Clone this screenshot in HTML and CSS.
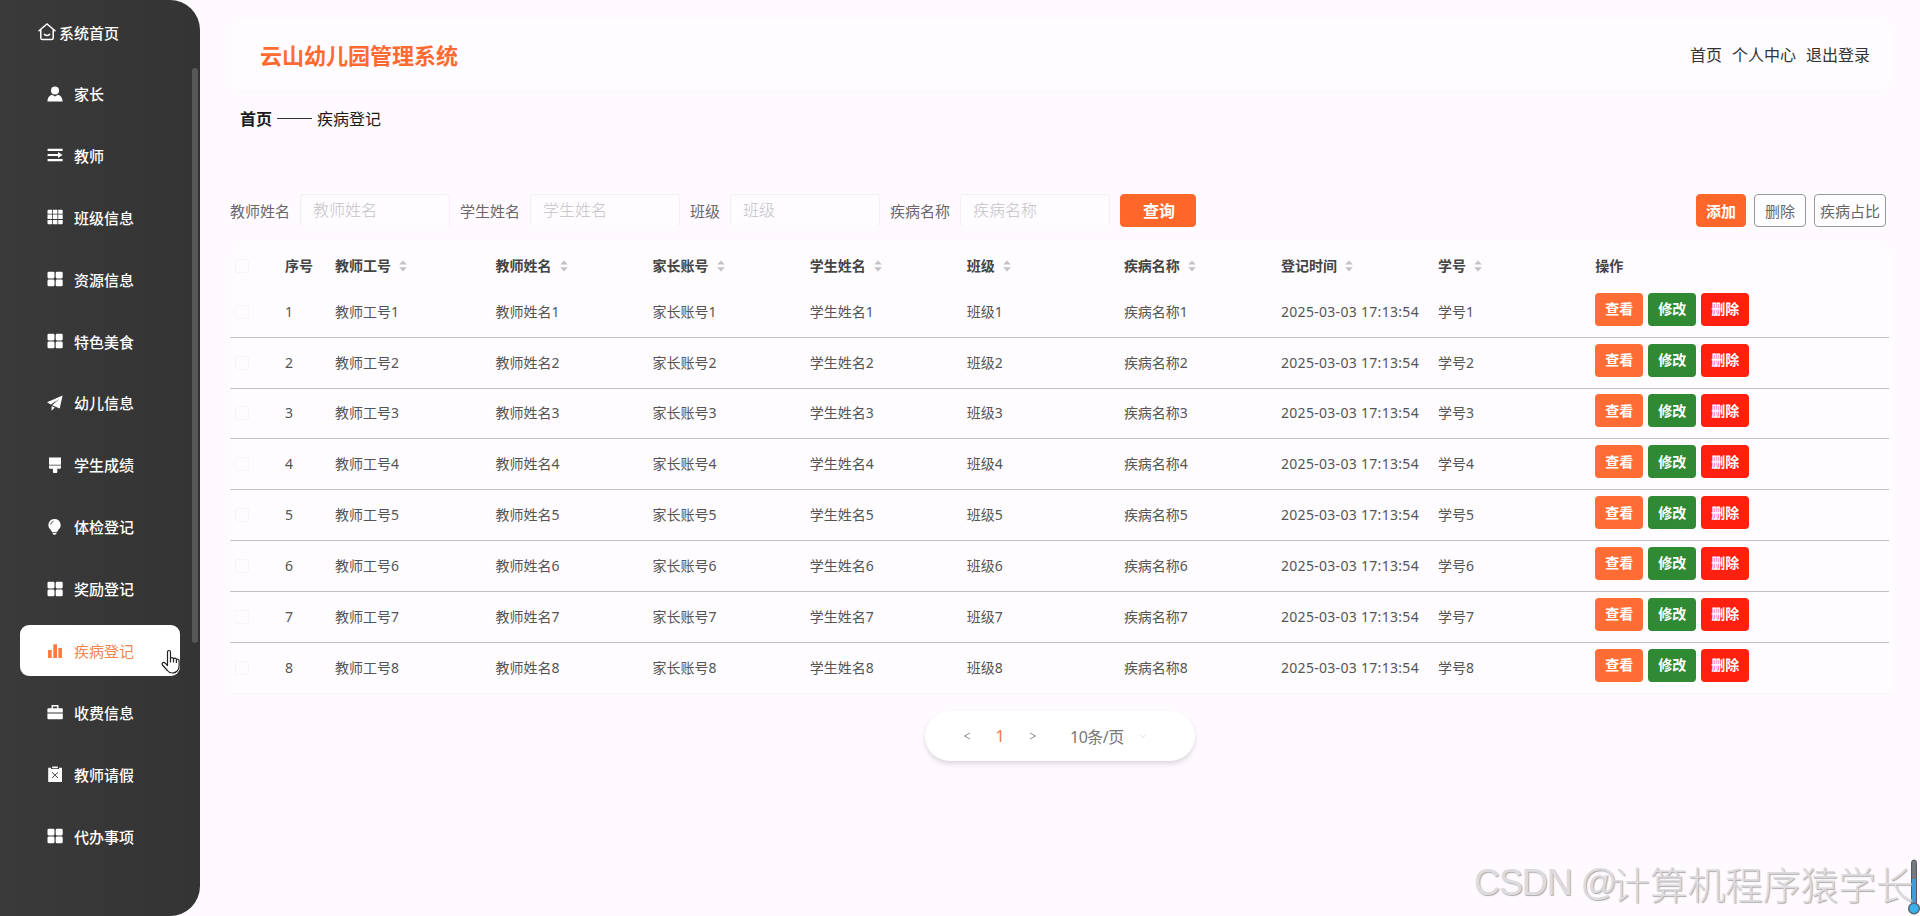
FILE: index.html
```html
<!DOCTYPE html>
<html lang="zh-CN">
<head>
<meta charset="utf-8">
<title>云山幼儿园管理系统</title>
<link rel="stylesheet" href="styles.css">
</head>
<body>
<svg class="defs" width="0" height="0">
  <symbol id="grid" viewBox="0 0 16 16"><rect x=".5" y=".8" width="7" height="6.6" rx="1.3"/><rect x="8.7" y=".8" width="7" height="6.6" rx="1.3"/><rect x=".5" y="8.6" width="7" height="6.6" rx="1.3"/><rect x="8.7" y="8.6" width="7" height="6.6" rx="1.3"/></symbol>
  <symbol id="sort" viewBox="0 0 8 12"><path d="M4 .4 7.8 4.6H.2ZM4 11.4 7.8 7.2H.2Z"/></symbol>
</svg>
<div class="app">
  <aside class="sidebar">
    <a class="home"><svg class="home-icon" viewBox="0 0 18 18"><path d="M1 7.8 9 1l8 6.8M2.8 6.8V15q0 1.6 1.6 1.6h9.2q1.6 0 1.6-1.6V6.8M6.4 11.4q2.6 2.2 5.2 0"/></svg>系统首页</a>
    <nav class="menu">
      <a class="item"><svg class="icon" viewBox="0 0 16 16"><circle cx="8" cy="4.4" r="4"/><path d="M.4 15.4c0-3.6 2-6 4.6-6.6l3 1.6 3-1.6c2.6.6 4.6 3 4.6 6.6Z"/></svg>家长</a>
      <a class="item"><svg class="icon" viewBox="0 0 16 16"><path d="M.6 1.700h15v2.200H.6zM.6 12h15v2.200H.6zM.6 6.900h10.400V4.900l4.600 3.100-4.600 3.100V9H.6z"/></svg>教师</a>
      <a class="item"><svg class="icon" viewBox="0 0 16 16"><path d="M1.500.8h3.600v4H.5v-3q0-1 1-1ZM5.900.8h4.500v4H5.900zM11.200.8h3.500q1 0 1 1v3h-4.500zM.5 5.600h4.600v4.500H.5zM5.900 5.600h4.500v4.500H5.900zM11.200 5.600h4.500v4.500h-4.500zM.5 11h4.600v4.200H1.500q-1 0-1-1zM5.900 11h4.500v4.200H5.900zM11.200 11h4.500v3.200q0 1-1 1h-3.500z"/></svg>班级信息</a>
      <a class="item"><svg class="icon"><use href="#grid"/></svg>资源信息</a>
      <a class="item"><svg class="icon"><use href="#grid"/></svg>特色美食</a>
      <a class="item"><svg class="icon" viewBox="0 0 16 16"><path d="M15.600.6 0 7.200l3.800 2.300L12.400 4 5.100 10.300 12.700 13.600ZM4.600 11.200v4.600l3.200-3.200Z"/></svg>幼儿信息</a>
      <a class="item"><svg class="icon" viewBox="0 0 16 16"><path d="M2 .6h12v7.200H2zM2 8.600h12v2.200q0 1-1 1h-2.700V15q0 1-1 1H6.900q-1 0-1-1v-3.200H3q-1 0-1-1z"/></svg>学生成绩</a>
      <a class="item"><svg class="icon" viewBox="0 0 16 17"><path d="M7.500 0a6.500 6.500 0 0 0-4 11.600l1.600 2.400h4.800l1.600-2.400A6.500 6.500 0 0 0 7.500 0ZM5.300 15h4.400q0 1.800-2.200 1.800T5.300 15Z"/><path class="cut" d="M3.400 6q.3-2.800 3-3.600"/></svg>体检登记</a>
      <a class="item"><svg class="icon"><use href="#grid"/></svg>奖励登记</a>
      <a class="item active"><svg class="icon" viewBox="0 0 16 16"><path d="M1 7h3.700v8H1zM6.300 1.200H10V15H6.300zM11.400 5H15v10h-3.600z"/></svg>疾病登记</a>
      <a class="item"><svg class="icon" viewBox="0 0 16 16"><path d="M4.500 1h7v3.200h3.300q1 0 1 1v3.400H.4V5.200q0-1 1-1h3.100zM6 2.500v1.700h4V2.500zM.4 9.400h15.400v4.800q0 1-1 1H1.400q-1 0-1-1z"/></svg>收费信息</a>
      <a class="item"><svg class="icon" viewBox="0 0 16 16"><path d="M1.200 1.800H4V3h8V1.800h3V16H1.200zM5.200.4h5.600v1.800H5.200z"/><path class="cut" d="m5 6.300 6 5.700M11 6.300 5 12"/></svg>教师请假</a>
      <a class="item"><svg class="icon"><use href="#grid"/></svg>代办事项</a>
    </nav>
    <div class="thumb"></div>
    <svg class="cursor" viewBox="0 0 20 26"><path d="M6.500 16.500V3.200q0-1.700 1.500-1.700t1.500 1.700v6.600q.2-1.400 1.500-1.200 1.300 0 1.500 1.400.4-1 1.500-.8 1.300.2 1.400 1.500.5-.8 1.500-.5 1.200.4 1.200 1.800v5q0 3.200-2 5-1.700 2-4.700 2-3.300 0-5-2.500L1.500 16q-.9-1.500.2-2.300 1.200-.7 2.500.5zM9.500 9v4.500M12.500 10v3.500M15.400 11v3"/></svg>
  </aside>
  <main class="main">
    <header class="header">
      <h1 class="title">云山幼儿园管理系统</h1>
      <nav class="links"><a>首页</a><a>个人中心</a><a>退出登录</a></nav>
    </header>
    <div class="crumbs"><b>首页</b><span class="dash"></span><span>疾病登记</span></div>
    <form class="filters">
      <label class="field">教师姓名<input class="input" placeholder="教师姓名"></label>
      <label class="field">学生姓名<input class="input" placeholder="学生姓名"></label>
      <label class="field">班级<input class="input" placeholder="班级"></label>
      <label class="field">疾病名称<input class="input" placeholder="疾病名称"></label>
      <button class="btn search" type="button">查询</button>
      <div class="actions"><button class="btn add" type="button">添加</button><button class="btn del" type="button">删除</button><button class="btn ratio" type="button">疾病占比</button></div>
    </form>
    <section class="table">
      <div class="row head"><i class="check"></i><span>序号</span><span>教师工号<svg class="sort"><use href="#sort"/></svg></span><span>教师姓名<svg class="sort"><use href="#sort"/></svg></span><span>家长账号<svg class="sort"><use href="#sort"/></svg></span><span>学生姓名<svg class="sort"><use href="#sort"/></svg></span><span>班级<svg class="sort"><use href="#sort"/></svg></span><span>疾病名称<svg class="sort"><use href="#sort"/></svg></span><span>登记时间<svg class="sort"><use href="#sort"/></svg></span><span>学号<svg class="sort"><use href="#sort"/></svg></span><span>操作</span></div>
      <div class="row"><i class="check"></i><span>1</span><span>教师工号1</span><span>教师姓名1</span><span>家长账号1</span><span>学生姓名1</span><span>班级1</span><span>疾病名称1</span><span class="time">2025-03-03 17:13:54</span><span>学号1</span><div class="ops"><button class="op view">查看</button><button class="op edit">修改</button><button class="op drop">删除</button></div></div>
      <div class="row"><i class="check"></i><span>2</span><span>教师工号2</span><span>教师姓名2</span><span>家长账号2</span><span>学生姓名2</span><span>班级2</span><span>疾病名称2</span><span class="time">2025-03-03 17:13:54</span><span>学号2</span><div class="ops"><button class="op view">查看</button><button class="op edit">修改</button><button class="op drop">删除</button></div></div>
      <div class="row"><i class="check"></i><span>3</span><span>教师工号3</span><span>教师姓名3</span><span>家长账号3</span><span>学生姓名3</span><span>班级3</span><span>疾病名称3</span><span class="time">2025-03-03 17:13:54</span><span>学号3</span><div class="ops"><button class="op view">查看</button><button class="op edit">修改</button><button class="op drop">删除</button></div></div>
      <div class="row"><i class="check"></i><span>4</span><span>教师工号4</span><span>教师姓名4</span><span>家长账号4</span><span>学生姓名4</span><span>班级4</span><span>疾病名称4</span><span class="time">2025-03-03 17:13:54</span><span>学号4</span><div class="ops"><button class="op view">查看</button><button class="op edit">修改</button><button class="op drop">删除</button></div></div>
      <div class="row"><i class="check"></i><span>5</span><span>教师工号5</span><span>教师姓名5</span><span>家长账号5</span><span>学生姓名5</span><span>班级5</span><span>疾病名称5</span><span class="time">2025-03-03 17:13:54</span><span>学号5</span><div class="ops"><button class="op view">查看</button><button class="op edit">修改</button><button class="op drop">删除</button></div></div>
      <div class="row"><i class="check"></i><span>6</span><span>教师工号6</span><span>教师姓名6</span><span>家长账号6</span><span>学生姓名6</span><span>班级6</span><span>疾病名称6</span><span class="time">2025-03-03 17:13:54</span><span>学号6</span><div class="ops"><button class="op view">查看</button><button class="op edit">修改</button><button class="op drop">删除</button></div></div>
      <div class="row"><i class="check"></i><span>7</span><span>教师工号7</span><span>教师姓名7</span><span>家长账号7</span><span>学生姓名7</span><span>班级7</span><span>疾病名称7</span><span class="time">2025-03-03 17:13:54</span><span>学号7</span><div class="ops"><button class="op view">查看</button><button class="op edit">修改</button><button class="op drop">删除</button></div></div>
      <div class="row"><i class="check"></i><span>8</span><span>教师工号8</span><span>教师姓名8</span><span>家长账号8</span><span>学生姓名8</span><span>班级8</span><span>疾病名称8</span><span class="time">2025-03-03 17:13:54</span><span>学号8</span><div class="ops"><button class="op view">查看</button><button class="op edit">修改</button><button class="op drop">删除</button></div></div>
    </section>
    <div class="pager">
      <svg class="arrow" viewBox="0 0 8 8"><path d="M7 1 1.500 4 7 7"/></svg>
      <span class="page">1</span>
      <svg class="arrow" viewBox="0 0 8 8"><path d="m1 1 5.500 3L1 7"/></svg>
      <span class="size">10条/页</span>
      <svg class="arrow faint" viewBox="0 0 8 8"><path d="m1 2.500 3 3 3-3"/></svg>
    </div>
  </main>
  <svg class="thermo" viewBox="0 0 14 58"><rect x="4.500" y="1" width="5" height="46" rx="2.500" fill="#727780" stroke="#5b5960"/><path d="M5 20h4v26H5z" fill="#3b9fd3"/><circle cx="7" cy="49.500" r="5.300" fill="#37b2ef" stroke="#5f6670" stroke-width="1.500"/></svg>
  <div class="watermark"><span class="latin">CSDN @</span><span class="han">计算机程序猿学长</span></div>
</div>
</body>
</html>
```
FILE: styles.css
```css
* { box-sizing: border-box; }
body { margin: 0; background: #fefaff; font-family: "Noto Sans", "Noto Sans CJK SC", sans-serif; color: #333; }
button, input { font-family: inherit; }
.defs { position: absolute; }
.app { position: relative; display: flex; width: 1920px; height: 916px; overflow: hidden; }

.sidebar { position: relative; width: 200px; height: 916px; padding-top: 13px; border-radius: 0 30px 30px 0; background: linear-gradient(90deg, #3a3a3a, #343434); color: #fff; font-size: 15px; font-weight: 500; }
.home { display: flex; align-items: center; gap: 3px; height: 38px; padding-left: 38px; }
.home-icon { width: 18px; height: 18px; fill: none; stroke: #fff; stroke-width: 1.5; stroke-linecap: round; }
.menu { display: grid; grid-auto-rows: 51px; row-gap: 10.9px; padding: 17px 20px 0; }
.item { display: flex; align-items: center; gap: 11px; padding-left: 27px; border-radius: 9px; }
.item.active { background: #fff; color: #f0854f; font-weight: 400; }
.icon { width: 16px; height: 16px; fill: currentColor; fill-rule: evenodd; }
.active .icon { fill: #ff7a3c; }
.cut { fill: none; stroke: #444; stroke-width: 1; }
.thumb { position: absolute; left: 192px; top: 68px; width: 6px; height: 575px; border-radius: 3px; background: #575757; }
.cursor { position: absolute; left: 161px; top: 649px; width: 20px; height: 26px; fill: #fff; stroke: #222; stroke-width: 1.2; stroke-linejoin: round; }

.main { flex: 1; display: flex; flex-direction: column; align-items: flex-start; padding: 20px 28px 0 30px; }
.header { display: flex; align-items: center; justify-content: space-between; width: 1662px; height: 72px; padding: 0 22px 2px 30px; border-radius: 12px; background: #fefcff; border-bottom: 1px solid #fbf7fb; }
.title { margin: 0; font-size: 22px; line-height: 30px; color: #ff6a30; }
.links { display: flex; gap: 10px; font-size: 16px; line-height: 24px; }
.crumbs { display: flex; align-items: center; height: 24px; margin: 14px 0 0 10px; font-size: 16px; color: #1c1c1c; }
.dash { width: 35px; height: 1px; margin: 0 5px 0 5px; background: #333; }

.filters { display: flex; align-items: flex-start; width: 1656px; height: 33px; margin-top: 64px; }
.field { display: flex; align-items: center; gap: 10px; height: 33px; margin-right: 10px; font-size: 15px; color: #6b6769; }
.input { width: 150px; height: 33px; padding: 0 12px 2px; border: 1px solid #f3eff4; border-bottom-color: #fcf9fc; border-radius: 4px; background: #fefcff; font-size: 16px; font-weight: 300; }
.input::placeholder { color: #c4c1c6; }
.btn { height: 33px; padding: 0; border: 1px solid #999; border-radius: 4px; background: #fefdff; color: #666; font-size: 15px; line-height: 20px; }
.search { width: 76px; padding-left: 2px; border-color: #ff6629; background: #ff6629; color: #fff; font-size: 16px; font-weight: 700; }
.actions { display: flex; gap: 8px; margin-left: auto; }
.add { width: 50px; border-color: #ff6629; background: #ff6629; color: #fff; font-weight: 700; }
.del { width: 52px; }
.ratio { width: 72px; }

.table { width: 1662px; margin-top: 18px; padding-right: 3px; border-radius: 12px 12px 0 0; background: #fefcff; border-bottom: 1px solid #f9f5f9; }
.row { display: grid; grid-template-columns: 50px 50px 160.5px repeat(7, 157.1px) 1fr; align-items: center; height: 50.8px; padding-left: 5px; border-bottom: 1px solid #c4c1c6; font-size: 14px; line-height: 20px; color: #555; }
.row:last-child { height: 50px; border-bottom: 0; }
.head { height: 42px; border-bottom: 0; font-weight: 700; color: #444; }
.check { width: 14px; height: 14px; border: 1px solid #f8f5f9; border-radius: 2px; }
.sort { width: 8px; height: 12px; margin-left: 8px; fill: #c3c1c6; vertical-align: -1px; }
.time { letter-spacing: .3px; white-space: nowrap; }
.ops { display: flex; gap: 5px; padding-bottom: 5px; }
.op { width: 48px; height: 33px; padding: 0 0 2px; border: 0; border-radius: 4px; color: #fff; font-size: 14px; font-weight: 700; }
.view { background: #ff6d35; }
.edit { background: #2f8a33; }
.drop { background: #ff2010; }

.pager { display: flex; align-items: center; width: 270px; height: 50px; margin: 17px 0 0 695px; padding-left: 38px; border-radius: 25px; background: #fff; box-shadow: 0 3px 5px rgba(60, 40, 60, .16); color: #777; }
.arrow { width: 8px; height: 8px; fill: none; stroke: #888; stroke-width: 1; }
.page { width: 58px; text-align: center; font-size: 16px; color: #f0794a; }
.size { margin: 0 15px 0 33px; font-size: 16px; letter-spacing: -.5px; }
.faint { stroke: #ddd; }

.thermo { position: absolute; left: 1907px; top: 859px; width: 14px; height: 58px; }
.watermark { position: absolute; left: 1474px; top: 858px; display: flex; line-height: 50px; color: #dedbdf; text-shadow: 1px 1px 1px #aaa; white-space: nowrap; }
.latin { width: 138px; font-family: "Liberation Sans", sans-serif; font-size: 36px; letter-spacing: -1.1px; }
.han { font-family: "Noto Sans CJK SC", sans-serif; font-size: 37.7px; font-weight: 300; }
```
